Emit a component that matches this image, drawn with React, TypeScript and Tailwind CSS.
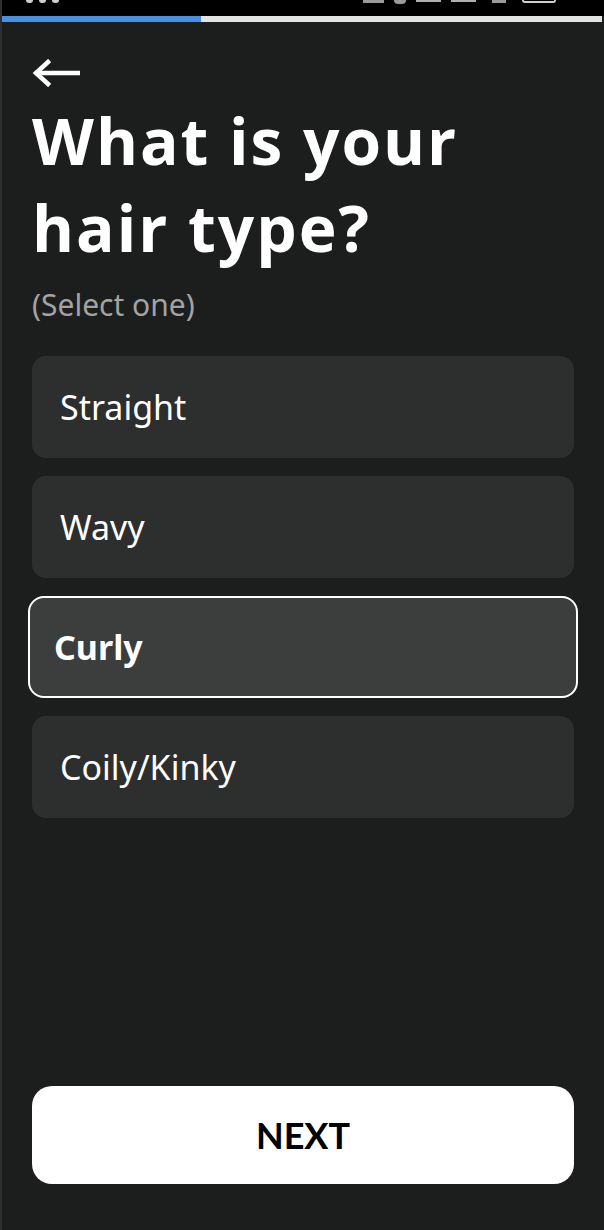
import { useState } from "react";

const options = ["Straight", "Wavy", "Curly", "Coily/Kinky"];

function BackArrow() {
  return (
    <svg width="48" height="28" viewBox="0 0 48 28" fill="none" stroke="white" strokeWidth="4.5" strokeLinecap="square">
      <path d="M16 3 L4 14 L16 25" strokeLinejoin="miter" />
      <path d="M5 14 H46" />
    </svg>
  );
}

// status bar is cut off at the top of the shot: only the bottoms of its glyphs show
function StatusBar() {
  return (
    <div className="h-4 bg-black -ml-[2px] flex items-start justify-between px-[26px]">
      <div className="flex gap-[6px]">
        <div className="w-[7px] h-[3px] rounded-b bg-[#cfcfcf]" />
        <div className="w-[7px] h-[3px] rounded-b bg-[#cfcfcf]" />
        <div className="w-[7px] h-[3px] rounded-b bg-[#cfcfcf]" />
      </div>
      <div className="flex items-start gap-[10px] mr-[22px]">
        <div className="w-[21px] h-[3px] bg-[#9a9a9a]" />
        <div className="w-[12px] h-[4px] rounded-b bg-[#9a9a9a]" />
        <div className="w-[25px] h-[2px] bg-[#b0b0b0]" />
        <div className="w-[25px] h-[2px] bg-[#b0b0b0]" />
        <div className="w-[14px] h-[3px] bg-[#9a9a9a] ml-[6px]" />
        <div className="w-[34px] h-[3px] rounded-b border-x-2 border-b-2 border-[#d0d0d0] ml-[6px]" />
      </div>
    </div>
  );
}

export default function App() {
  const [selected, setSelected] = useState("Curly");

  return (
    <div className="h-[1230px] w-full bg-[#1c1d1d] flex flex-col border-l-2 border-[#2c2e31] font-['Open_Sans',_sans-serif] text-white overflow-hidden">
      <StatusBar />
      {/* progress */}
      <div className="h-[6px] flex mr-[2px]">
        <div className="w-[199px] bg-[#4a90e2]" />
        <div className="flex-1 bg-[#e2e2e2]" />
      </div>

      <div className="flex-1 flex flex-col px-[30px]">
        <button className="mt-[37px] w-fit">
          <BackArrow />
        </button>

        <h1 className="mt-[10px] text-[64px] leading-[87px] font-bold tracking-[2px]">
          What is your
          <br />
          hair type?
        </h1>
        <p className="mt-[14px] text-[30px] leading-[40px] text-[#a3a3a3] font-['Noto_Sans',_sans-serif]">
          (Select one)
        </p>

        <div className="mt-[31px] flex flex-col gap-[18px]">
          {options.map((o) =>
            o === selected ? (
              <button
                key={o}
                onClick={() => setSelected(o)}
                className="h-[102px] -mx-[4px] rounded-[16px] border-2 border-white bg-[#3c3d3d] text-left px-[24px] text-[34px] font-bold font-['Noto_Sans',_sans-serif]"
              >
                {o}
              </button>
            ) : (
              <button
                key={o}
                onClick={() => setSelected(o)}
                className="h-[102px] rounded-[14px] bg-[#2d2e2e] text-left px-[28px] text-[34px] font-['Noto_Sans',_sans-serif]"
              >
                {o}
              </button>
            )
          )}
        </div>

        <button className="mt-auto mb-[46px] h-[98px] rounded-[20px] bg-white text-black text-[36px] font-bold font-['Lato',_sans-serif]">
          NEXT
        </button>
      </div>
    </div>
  );
}
